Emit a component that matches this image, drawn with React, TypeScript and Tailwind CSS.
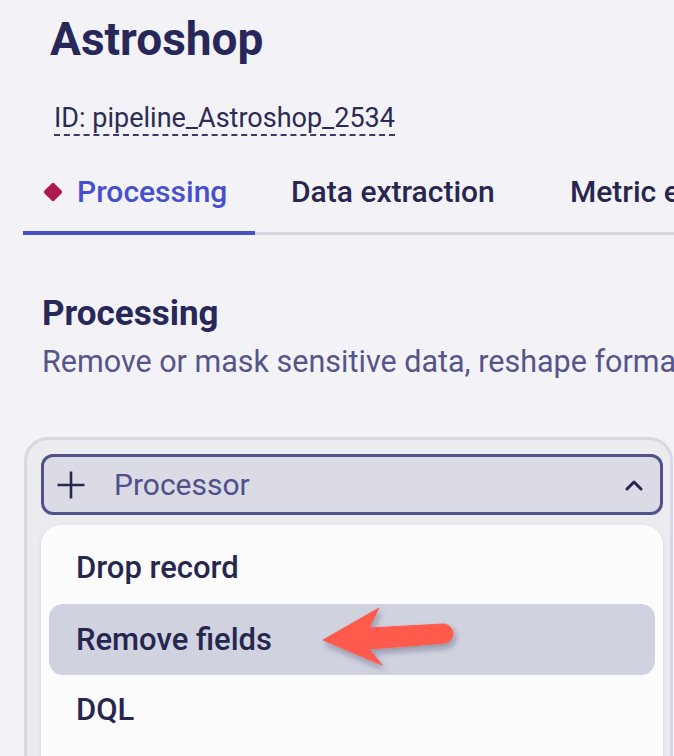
import React from "react";

function Plus() {
  return (
    <svg width="30" height="30" viewBox="0 0 30 30" fill="none" className="shrink-0">
      <path d="M15 1.5V28.5M1.5 15H28.5" stroke="#262650" strokeWidth="2.6" />
    </svg>
  );
}

function ChevronUp() {
  return (
    <svg width="18" height="12" viewBox="0 0 18 12" fill="none">
      <path d="M2 10L9 3L16 10" stroke="#262650" strokeWidth="3" strokeLinecap="round" strokeLinejoin="round" />
    </svg>
  );
}

function Arrow() {
  return (
    <svg
      width="160"
      height="71"
      viewBox="0 0 160 71"
      className="absolute left-[260px] top-0"
      style={{ overflow: "visible" }}
    >
      <defs>
        <filter id="sh" x="-20%" y="-30%" width="150%" height="180%">
          <feDropShadow dx="2" dy="4" stdDeviation="3" floodColor="#1a1a3a" floodOpacity="0.35" />
        </filter>
      </defs>
      <path
        d="M14 36 L70 4 L60 24 L134 20 A9.6 9.6 0 0 1 134.8 39.2 L60 45 L73 61 Z"
        fill="#ff5a4c"
        stroke="#ff5a4c"
        strokeWidth="1"
        strokeLinejoin="round"
        filter="url(#sh)"
      />
    </svg>
  );
}

export default function App() {
  return (
    <div className="w-[674px] h-[756px] overflow-hidden bg-[#f3f3f7] font-['Roboto',sans-serif] text-[#26264f]">
      <div className="pl-[50px] pt-[13px]">
        <h1 className="text-[46px] font-bold leading-[52px] text-[#27275a]">Astroshop</h1>
      </div>
      <div className="flex pl-[54px] pt-[37px]">
        <span className="block border-b-2 border-dashed border-[#3a3a6a] text-[27px] leading-[32px] text-[#2b2b55]">
          ID: pipeline_Astroshop_2534
        </span>
      </div>
      <div className="ml-[23px] mt-[24px] flex border-b-[3px] border-[#d6d6e2] whitespace-nowrap">
        <div className="-mb-[3px] flex w-[232px] shrink-0 items-center gap-[17px] border-b-4 border-[#4650cc] pb-[21px] pl-[23px] pt-[14px]">
          <span className="block h-[14px] w-[14px] shrink-0 rotate-45 rounded-[2px] bg-[#ad184d]" />
          <span className="text-[30px] font-medium leading-[36px] text-[#4650cc]">Processing</span>
        </div>
        <div className="w-[279px] shrink-0 pl-[36px] pt-[14px] text-[30px] font-medium leading-[36px] text-[#26264f]">
          Data extraction
        </div>
        <div className="shrink-0 pl-[36px] pt-[14px] text-[30px] font-medium leading-[36px] text-[#26264f]">
          Metric extraction
        </div>
      </div>
      <div className="pl-[42px] pt-[58px] whitespace-nowrap">
        <h2 className="text-[35px] font-bold leading-[42px] text-[#27275a]">Processing</h2>
        <p className="mt-[9px] text-[30.5px] leading-[36px] text-[#55558a]">
          Remove or mask sensitive data, reshape formats and more.
        </p>
      </div>
      <div className="ml-[24px] mt-[57px] h-[400px] w-[649px] rounded-[24px] border-[3px] border-[#d8d8e4] bg-[#ebebf0] pl-[14px] pt-[14px]">
        <div className="flex h-[61px] w-[622px] items-center rounded-[12px] border-[3px] border-[#52528a] bg-[#dbdbe6] pl-[12px] pr-[17px]">
          <Plus />
          <span className="ml-[28px] text-[30px] leading-[36px] text-[#50508a]">Processor</span>
          <span className="ml-auto flex">
            <ChevronUp />
          </span>
        </div>
        <div className="mt-[10px] h-[300px] w-[622px] rounded-[20px] bg-[#fcfcfd] pt-[8px] shadow-[0_1px_4px_rgba(40,40,90,0.12)]">
          <div className="flex h-[70px] items-center px-[35px] text-[31px] font-medium leading-[38px] text-[#26264f]">
            Drop record
          </div>
          <div className="relative mx-[8px] mt-[1px] flex h-[71px] items-center rounded-[14px] bg-[#d0d2e0] px-[27px] text-[31px] font-medium leading-[38px] text-[#26264f]">
            Remove fields
            <Arrow />
          </div>
          <div className="flex h-[70px] items-center px-[35px] text-[31px] font-medium leading-[38px] text-[#26264f]">
            DQL
          </div>
        </div>
      </div>
    </div>
  );
}
